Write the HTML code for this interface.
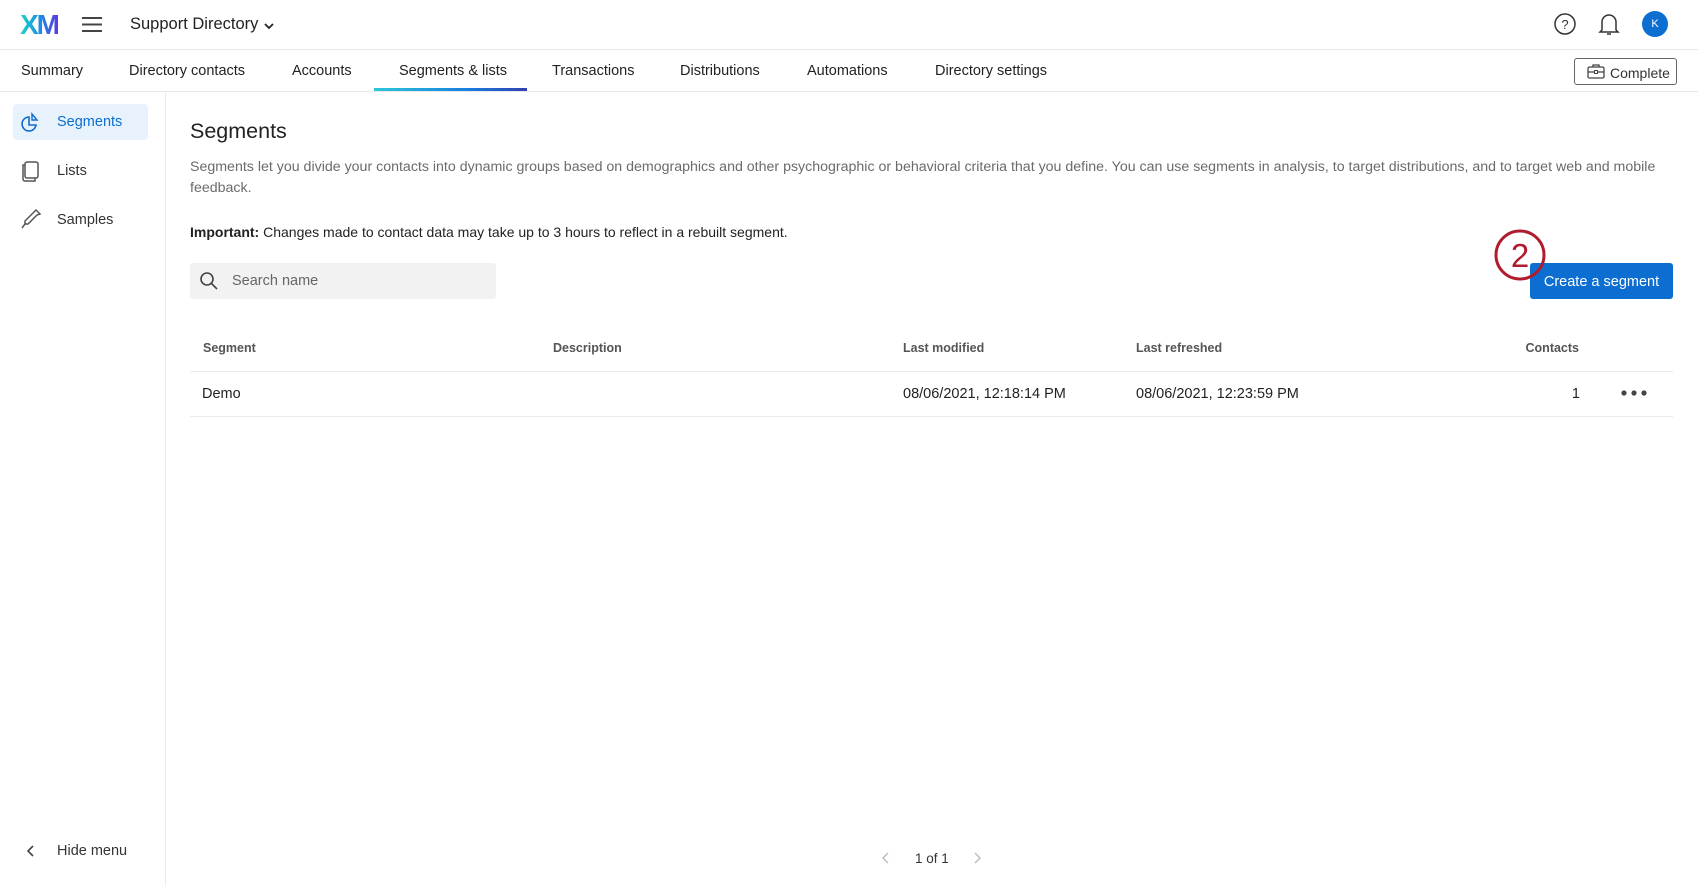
<!DOCTYPE html>
<html><head><meta charset="utf-8"><style>
*{margin:0;padding:0;box-sizing:border-box}
body{width:1698px;height:886px;background:#fff;font-family:"Liberation Sans",sans-serif;color:#222;position:relative;overflow:hidden}
.a{position:absolute;white-space:nowrap}
.tab{position:absolute;top:63px;font-size:14.5px;color:#222}
.th{position:absolute;top:341px;font-size:12.5px;font-weight:bold;color:#555}
.td{position:absolute;top:386px;font-size:14.5px;color:#222}
</style></head><body>
<div class="a" style="left:20px;top:9px;font-size:28px;font-weight:bold;letter-spacing:-2px;background:linear-gradient(90deg,#21d4c4,#1a8fe8 50%,#5b3be0);-webkit-background-clip:text;color:transparent">XM</div>
<svg class="a" style="left:81px;top:16px" width="22" height="17"><path d="M1 2h20M1 8.5h20M1 15h20" stroke="#444" stroke-width="2"/></svg>
<div class="a" style="left:130px;top:15px;font-size:16.5px;color:#222">Support Directory</div>
<svg class="a" style="left:263px;top:22px" width="12" height="8"><path d="M2 2l4 4 4-4" stroke="#222" stroke-width="1.8" fill="none"/></svg>
<svg class="a" style="left:1553px;top:12px" width="24" height="24"><circle cx="12" cy="12" r="10" stroke="#333" stroke-width="1.5" fill="none"/><text x="12" y="17" text-anchor="middle" font-size="13" font-family="Liberation Sans" fill="#333">?</text></svg>
<svg class="a" style="left:1597px;top:11px" width="24" height="26"><path d="M5 19V11a7 7 0 0114 0v8l2 2H3z" stroke="#333" stroke-width="1.5" fill="none"/><path d="M10 23h4" stroke="#333" stroke-width="1.5"/></svg>
<div class="a" style="left:1642px;top:11px;width:26px;height:26px;border-radius:50%;background:#0b6ed0;color:#fff;font-size:11px;text-align:center;line-height:26px">K</div>
<div class="a" style="left:0;top:49px;width:1698px;height:1px;background:#e8e8e8"></div>
<div class="tab" style="left:21px">Summary</div>
<div class="tab" style="left:129px">Directory contacts</div>
<div class="tab" style="left:292px">Accounts</div>
<div class="tab" style="left:399px">Segments &amp; lists</div>
<div class="tab" style="left:552px">Transactions</div>
<div class="tab" style="left:680px">Distributions</div>
<div class="tab" style="left:807px">Automations</div>
<div class="tab" style="left:935px">Directory settings</div>
<div class="a" style="left:374px;top:88px;width:153px;height:3px;background:linear-gradient(90deg,#2cc7d8,#1a7fe0 60%,#3340b0)"></div>
<div class="a" style="left:0;top:91px;width:1698px;height:1px;background:#e8e8e8"></div>
<div class="a" style="left:1574px;top:58px;width:103px;height:27px;border:1.5px solid #666;border-radius:3px"></div>
<svg class="a" style="left:1587px;top:64px" width="18" height="15"><rect x="1" y="3" width="16" height="11" rx="1.5" stroke="#444" stroke-width="1.3" fill="none"/><path d="M6 3V1h6v2M1 8h16" stroke="#444" stroke-width="1.3" fill="none"/><rect x="7.5" y="6.5" width="3" height="3" fill="#fff" stroke="#444"/></svg>
<div class="a" style="left:1610px;top:65px;font-size:14px;color:#333">Complete</div>
<div class="a" style="left:165px;top:92px;width:1px;height:794px;background:#ececec"></div>
<div class="a" style="left:13px;top:104px;width:135px;height:36px;background:#e8f2fd;border-radius:4px"></div>
<svg class="a" style="left:20px;top:112px" width="22" height="20"><path d="M9 5a7 7 0 107 8H9z" stroke="#0b6ed0" stroke-width="1.6" fill="none"/><path d="M12 2l5 6h-5z" stroke="#0b6ed0" stroke-width="1.4" fill="none"/></svg>
<div class="a" style="left:57px;top:114px;font-size:14.5px;color:#0b6ed0">Segments</div>
<svg class="a" style="left:20px;top:160px" width="22" height="22"><rect x="5" y="2" width="13" height="16" rx="2" stroke="#555" stroke-width="1.5" fill="none"/><path d="M5 5H3v14a2 2 0 002 2h10v-3" stroke="#555" stroke-width="1.5" fill="none"/></svg>
<div class="a" style="left:57px;top:163px;font-size:14.5px;color:#333">Lists</div>
<svg class="a" style="left:20px;top:208px" width="22" height="22"><path d="M16 2l4 4-3 1-9 9-3 0 0-3 9-9z" stroke="#555" stroke-width="1.5" fill="none"/><path d="M5 16l-3 4" stroke="#555" stroke-width="1.5"/></svg>
<div class="a" style="left:57px;top:212px;font-size:14.5px;color:#333">Samples</div>
<svg class="a" style="left:26px;top:844px" width="10" height="14"><path d="M7 2L2 7l5 5" stroke="#444" stroke-width="1.6" fill="none"/></svg>
<div class="a" style="left:57px;top:843px;font-size:14.5px;color:#333">Hide menu</div>
<div class="a" style="left:190px;top:119px;font-size:21.5px;color:#222">Segments</div>
<div class="a" style="left:190px;top:157px;width:1475px;white-space:normal;font-size:14.2px;line-height:20.6px;color:#6b6b6b">Segments let you divide your contacts into dynamic groups based on demographics and other psychographic or behavioral criteria that you define. You can use segments in analysis, to target distributions, and to target web and mobile feedback.</div>
<div class="a" style="left:190px;top:224px;font-size:14px;color:#222"><b>Important:</b> Changes made to contact data may take up to 3 hours to reflect in a rebuilt segment.</div>
<div class="a" style="left:190px;top:263px;width:306px;height:36px;background:#f2f2f2;border-radius:3px"></div>
<svg class="a" style="left:199px;top:271px" width="20" height="20"><circle cx="8" cy="8" r="6" stroke="#444" stroke-width="1.6" fill="none"/><path d="M12.5 12.5L18 18" stroke="#444" stroke-width="1.6"/></svg>
<div class="a" style="left:232px;top:273px;font-size:14.5px;color:#666">Search name</div>
<div class="a" style="left:1530px;top:263px;width:143px;height:36px;background:#0b6ed0;border-radius:3px;color:#fff;font-size:14.5px;text-align:center;line-height:38px">Create a segment</div>
<svg class="a" style="left:1493px;top:228px" width="56" height="56"><circle cx="27" cy="27" r="24" stroke="#b01c2e" stroke-width="3" fill="none"/><text x="27" y="39" text-anchor="middle" font-size="33" font-family="Liberation Sans" fill="#b01c2e">2</text></svg>
<div class="th" style="left:203px">Segment</div>
<div class="th" style="left:553px">Description</div>
<div class="th" style="left:903px">Last modified</div>
<div class="th" style="left:1136px">Last refreshed</div>
<div class="th" style="left:1500px;width:79px;text-align:right">Contacts</div>
<div class="a" style="left:190px;top:371px;width:1483px;height:1px;background:#ebebeb"></div>
<div class="td" style="left:202px">Demo</div>
<div class="td" style="left:903px">08/06/2021, 12:18:14 PM</div>
<div class="td" style="left:1136px">08/06/2021, 12:23:59 PM</div>
<div class="td" style="left:1540px;width:40px;text-align:right">1</div>
<svg class="a" style="left:1620px;top:388px" width="28" height="10"><circle cx="4" cy="5" r="2.6" fill="#444"/><circle cx="14" cy="5" r="2.6" fill="#444"/><circle cx="24" cy="5" r="2.6" fill="#444"/></svg>
<div class="a" style="left:190px;top:416px;width:1483px;height:1px;background:#ebebeb"></div>
<svg class="a" style="left:881px;top:851px" width="10" height="14"><path d="M7 2L2 7l5 5" stroke="#bbb" stroke-width="1.4" fill="none"/></svg>
<div class="a" style="left:915px;top:851px;font-size:13.5px;color:#333">1 of 1</div>
<svg class="a" style="left:972px;top:851px" width="10" height="14"><path d="M3 2l5 5-5 5" stroke="#bbb" stroke-width="1.4" fill="none"/></svg>
</body></html>
